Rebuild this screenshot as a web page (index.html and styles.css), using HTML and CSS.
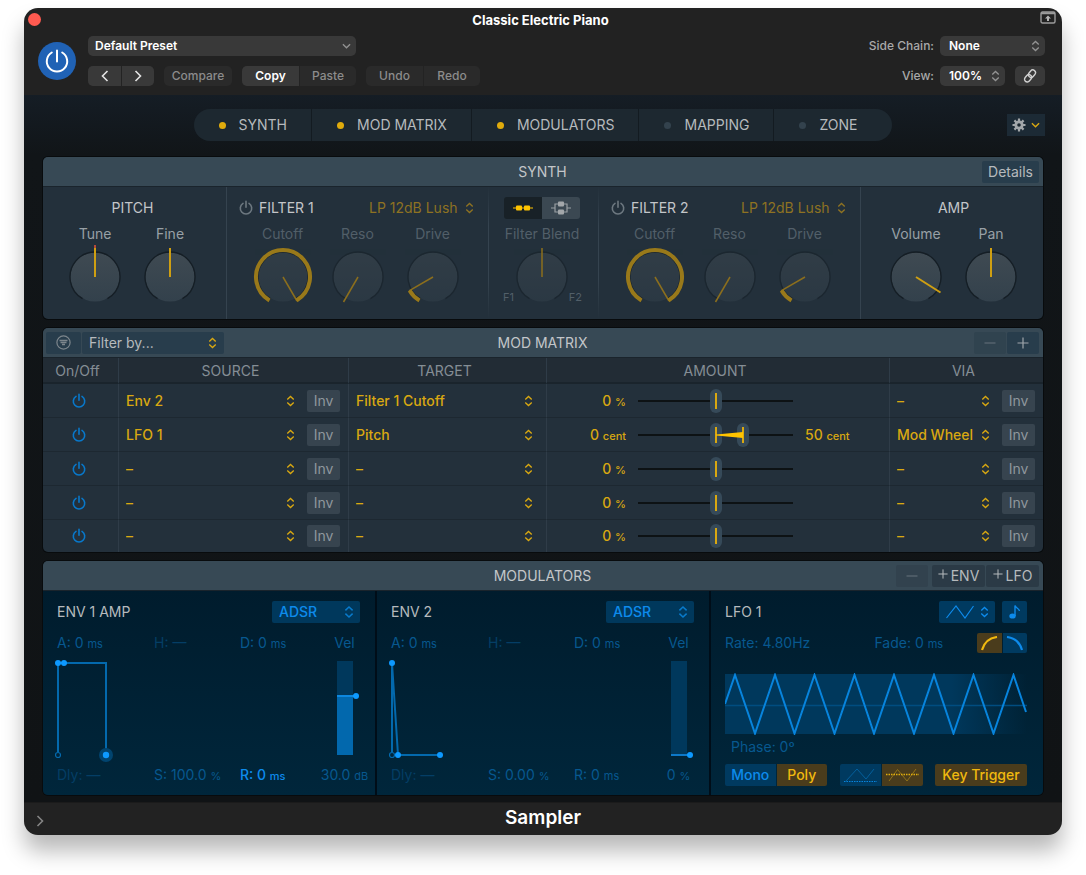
FILE: index.html
```
<!DOCTYPE html>
<html lang="en">
<head>
  <meta charset="UTF-8">
  <meta name="viewport" content="width=device-width, initial-scale=1.0">
  <title>Classic Electric Piano</title>
  <link rel="stylesheet" href="styles.css">
</head>
<body>
  <!-- shared icons -->
  <svg class="icons" aria-hidden="true">
    <symbol id="power" viewBox="0 0 16 16"><path d="M5 3.4a5.7 5.7 0 1 0 6 0M8 1.2v6" fill="none" stroke="currentColor" stroke-width="1.6" stroke-linecap="round"/></symbol>
    <symbol id="updown" viewBox="0 0 10 12"><path d="M1.4 4.4 5 1l3.6 3.4M1.4 7.6 5 11l3.6-3.4" fill="none" stroke="currentColor" stroke-width="1.5"/></symbol>
    <symbol id="down" viewBox="0 0 10 6"><path d="M1 1l4 4 4-4" fill="none" stroke="currentColor" stroke-width="1.5"/></symbol>
    <symbol id="right" viewBox="0 0 8 12"><path d="M1.5 1 6.5 6l-5 5" fill="none" stroke="currentColor" stroke-width="1.6"/></symbol>
    <symbol id="minus" viewBox="0 0 12 12"><path d="M.5 6h11" stroke="currentColor" stroke-width="1.2"/></symbol>
    <symbol id="plus" viewBox="0 0 12 12"><path d="M.5 6h11M6 .5v11" stroke="currentColor" stroke-width="1.2"/></symbol>
    <linearGradient id="dial" x1="0" y1="0" x2="0" y2="1">
      <stop offset="0" stop-color="#3f4a52"/>
      <stop offset="1" stop-color="#33414c"/>
    </linearGradient>
    <linearGradient id="fade" x1="0" y1="0" x2="1" y2="0">
      <stop offset="0.75" stop-color="#00385c"/>
      <stop offset="1" stop-color="#00385c" stop-opacity="0"/>
    </linearGradient>
    <symbol id="knob" viewBox="0 0 64 64">
      <circle cx="32" cy="32" r="24.5" fill="url(#dial)"/>
      <path d="M19.5 53.65a25 25 0 1 1 25 0" fill="none" stroke="#151e25" stroke-width="1.3"/>
    </symbol>
  </svg>

  <main class="window">
    <header class="top">
      <button class="close" aria-label="Close"></button>
      <h1>Classic Electric Piano</h1>
      <button class="detach" aria-label="Detach">
        <svg width="16" height="13" viewBox="0 0 16 13"><rect x="1" y="1" width="14" height="11" rx="1.5" fill="none" stroke="#9b9b9b" stroke-width="1.4"/><path d="M1 2.2h14" stroke="#9b9b9b" stroke-width="2"/><path d="M8 4.5l3 3H9V10H7V7.5H5z" fill="#b5b5b5"/></svg>
      </button>

      <button class="bypass" aria-label="Power" aria-pressed="true">
        <svg width="28" height="28" viewBox="0 0 28 28"><path d="M8.8 5.5a10.2 10.2 0 1 0 10.4 0M14 3.5v11" fill="none" stroke="#fff" stroke-width="2" stroke-linecap="round"/></svg>
      </button>

      <div class="presets">
        <span class="select preset">
          <select aria-label="Preset"><option>Default Preset</option></select>
          <svg width="9" height="6"><use href="#down"/></svg>
        </span>
        <div class="buttons">
          <span class="group">
            <button class="on" aria-label="Previous"><svg class="flip" width="8" height="12"><use href="#right"/></svg></button>
            <button class="on" aria-label="Next"><svg width="8" height="12"><use href="#right"/></svg></button>
          </span>
          <span class="group"><button class="wide">Compare</button></span>
          <span class="group edit"><button class="on">Copy</button><button>Paste</button></span>
          <span class="group edit"><button>Undo</button><button>Redo</button></span>
        </div>
      </div>

      <div class="options">
        <label for="chain">Side Chain:</label>
        <span class="select chain">
          <select id="chain"><option>None</option></select>
          <svg width="9" height="12"><use href="#updown"/></svg>
        </span>
        <label for="view">View:</label>
        <span class="select">
          <select id="view"><option>100%</option></select>
          <svg width="9" height="12"><use href="#updown"/></svg>
        </span>
        <button class="link" aria-label="Link">
          <svg width="16" height="16" viewBox="0 0 16 16"><g transform="rotate(-50 8 8)" fill="none" stroke="#d0d0d0" stroke-width="1.4"><rect x="1" y="5.3" width="8" height="5.4" rx="2.7"/><rect x="7" y="5.3" width="8" height="5.4" rx="2.7"/></g></svg>
        </button>
      </div>
    </header>

    <div class="stage">
      <div class="nav">
        <nav class="tabs">
          <button class="lit">SYNTH</button>
          <button class="lit">MOD MATRIX</button>
          <button class="lit">MODULATORS</button>
          <button>MAPPING</button>
          <button>ZONE</button>
        </nav>
        <button class="gear" aria-label="Settings">
          <svg width="14" height="14" viewBox="0 0 14 14"><g stroke="#a3a7aa" stroke-width="2.2"><path d="M7 .5v13M.5 7h13M2.4 2.4l9.2 9.2M11.6 2.4l-9.2 9.2"/></g><circle cx="7" cy="7" r="4.6" fill="#a3a7aa"/><circle cx="7" cy="7" r="1.8" fill="#1c2831"/></svg>
          <svg class="yellow" width="9" height="6"><use href="#down"/></svg>
        </button>
      </div>

      <section class="panel">
        <div class="bar">
          <span></span>
          <h2>SYNTH</h2>
          <span class="tools"><button>Details</button></span>
        </div>
        <div class="synth">
          <div class="unit pitch">
            <h3>PITCH</h3>
            <div class="knobs">
              <label class="knob">Tune
                <svg width="64" height="64"><use href="#knob"/><path d="M32 32V3"/><path class="red" d="M32 0v3"/></svg>
                <input type="range" value="50">
              </label>
              <label class="knob">Fine
                <svg width="64" height="64"><use href="#knob"/><path d="M32 32V3"/></svg>
                <input type="range" value="50">
              </label>
            </div>
          </div>

          <div class="unit off">
            <div class="filter">
              <button aria-label="Filter 1 on"><svg width="16" height="16"><use href="#power"/></svg></button>
              <h3>FILTER 1</h3>
              <span class="select">
                <select aria-label="Filter 1 type"><option>LP 12dB Lush</option></select>
                <svg width="9" height="12"><use href="#updown"/></svg>
              </span>
            </div>
            <div class="knobs">
              <label class="knob">Cutoff
                <svg width="64" height="64"><use href="#knob"/><path d="M32 32l14 24"/><path class="ring" d="M18.5 55.4a27 27 0 1 1 27 0"/></svg>
                <input type="range" value="100">
              </label>
              <label class="knob">Reso
                <svg width="64" height="64"><use href="#knob"/><path d="M32 32 17.5 57"/></svg>
                <input type="range" value="0">
              </label>
              <label class="knob">Drive
                <svg width="64" height="64"><use href="#knob"/><path d="M32 32 8 45.8"/><path class="ring" d="M18.5 55.4a27 27 0 0 1-9.9-9.9"/></svg>
                <input type="range" value="10">
              </label>
            </div>
          </div>

          <div class="unit off blend">
            <div class="routing">
              <button class="active" aria-label="Serial">
                <svg width="22" height="12" viewBox="0 0 22 12"><path d="M1 6h20" stroke="#ffc400" stroke-width="1.2"/><rect x="4" y="3.5" width="6" height="5" rx="1" fill="#ffc400"/><rect x="12" y="3.5" width="6" height="5" rx="1" fill="#ffc400"/></svg>
              </button>
              <button aria-label="Parallel">
                <svg width="20" height="14" viewBox="0 0 20 14"><path d="M0 7h4M16 7h4M4 3h12v8H4z" fill="none" stroke="#9a9fa3" stroke-width="1.2"/><rect x="7" y="0.5" width="6" height="5" rx="1" fill="#a3a7aa"/><rect x="7" y="8.5" width="6" height="5" rx="1" fill="#a3a7aa"/></svg>
              </button>
            </div>
            <div class="knobs">
              <label class="knob">Filter Blend
                <svg width="64" height="64"><use href="#knob"/><path d="M32 32V3"/></svg>
                <input type="range" value="50">
              </label>
            </div>
            <div class="ends"><span>F1</span><span>F2</span></div>
          </div>

          <div class="unit off">
            <div class="filter">
              <button aria-label="Filter 2 on"><svg width="16" height="16"><use href="#power"/></svg></button>
              <h3>FILTER 2</h3>
              <span class="select">
                <select aria-label="Filter 2 type"><option>LP 12dB Lush</option></select>
                <svg width="9" height="12"><use href="#updown"/></svg>
              </span>
            </div>
            <div class="knobs">
              <label class="knob">Cutoff
                <svg width="64" height="64"><use href="#knob"/><path d="M32 32l14 24"/><path class="ring" d="M18.5 55.4a27 27 0 1 1 27 0"/></svg>
                <input type="range" value="100">
              </label>
              <label class="knob">Reso
                <svg width="64" height="64"><use href="#knob"/><path d="M32 32 17.5 57"/></svg>
                <input type="range" value="0">
              </label>
              <label class="knob">Drive
                <svg width="64" height="64"><use href="#knob"/><path d="M32 32 8 45.8"/><path class="ring" d="M18.5 55.4a27 27 0 0 1-9.9-9.9"/></svg>
                <input type="range" value="10">
              </label>
            </div>
          </div>

          <div class="unit amp">
            <h3>AMP</h3>
            <div class="knobs">
              <label class="knob">Volume
                <svg width="64" height="64"><use href="#knob"/><path d="M32 32l24.5 15.5"/></svg>
                <input type="range" value="90">
              </label>
              <label class="knob">Pan
                <svg width="64" height="64"><use href="#knob"/><path d="M32 32V3"/></svg>
                <input type="range" value="50">
              </label>
            </div>
          </div>
        </div>
      </section>

      <section class="panel">
        <div class="bar">
          <span class="tools">
            <button class="small funnel" aria-label="Filter"><svg width="15" height="15" viewBox="0 0 15 15"><circle cx="7.5" cy="7.5" r="6.6" fill="none" stroke="#7d868c" stroke-width="1.2"/><path d="M3.5 5.5h8M4.5 7.500h6M6 9.500h3" stroke="#7d868c" stroke-width="1.3"/></svg></button>
            <span class="select filterby">
              <select aria-label="Filter by"><option>Filter by...</option></select>
              <svg width="9" height="12"><use href="#updown"/></svg>
            </span>
          </span>
          <h2>MOD MATRIX</h2>
          <span class="tools">
            <button class="small faint" aria-label="Remove"><svg width="12" height="12"><use href="#minus"/></svg></button>
            <button class="small" aria-label="Add"><svg width="12" height="12"><use href="#plus"/></svg></button>
          </span>
        </div>
        <table class="matrix">
          <colgroup><col class="c-on"><col class="c-source"><col class="c-target"><col class="c-amount"><col class="c-via"></colgroup>
          <thead>
            <tr><th>On/Off</th><th>SOURCE</th><th>TARGET</th><th>AMOUNT</th><th>VIA</th></tr>
          </thead>
          <tbody>
            <tr>
              <td><button class="toggle" aria-label="On"><svg width="16" height="16"><use href="#power"/></svg></button></td>
              <td><div class="cell"><span class="select"><select aria-label="Source"><option>Env 2</option></select><svg width="9" height="12"><use href="#updown"/></svg></span><button class="inv">Inv</button></div></td>
              <td><div class="cell target"><span class="select"><select aria-label="Target"><option>Filter 1 Cutoff</option></select><svg width="9" height="12"><use href="#updown"/></svg></span></div></td>
              <td><div class="amount"><span class="value">0 <small>%</small></span><span class="slider"><input type="range" aria-label="Amount" value="50"></span></div></td>
              <td><div class="cell"><span class="select"><select aria-label="Via"><option>–</option></select><svg width="9" height="12"><use href="#updown"/></svg></span><button class="inv">Inv</button></div></td>
            </tr>
            <tr>
              <td><button class="toggle" aria-label="On"><svg width="16" height="16"><use href="#power"/></svg></button></td>
              <td><div class="cell"><span class="select"><select aria-label="Source"><option>LFO 1</option></select><svg width="9" height="12"><use href="#updown"/></svg></span><button class="inv">Inv</button></div></td>
              <td><div class="cell target"><span class="select"><select aria-label="Target"><option>Pitch</option></select><svg width="9" height="12"><use href="#updown"/></svg></span></div></td>
              <td>
                <div class="amount">
                  <span class="value">0 <small>cent</small></span>
                  <span class="slider">
                    <input type="range" aria-label="Amount" value="50">
                    <input class="over" type="range" aria-label="Via amount" value="69">
                    <svg class="wedge" width="27" height="8" viewBox="0 0 27 8"><path d="M0 3.5 27 1v6L0 4.5z" fill="#ffc400"/></svg>
                  </span>
                  <span>50 <small>cent</small></span>
                </div>
              </td>
              <td><div class="cell"><span class="select"><select aria-label="Via"><option>Mod Wheel</option></select><svg width="9" height="12"><use href="#updown"/></svg></span><button class="inv">Inv</button></div></td>
            </tr>
            <tr>
              <td><button class="toggle" aria-label="On"><svg width="16" height="16"><use href="#power"/></svg></button></td>
              <td><div class="cell"><span class="select"><select aria-label="Source"><option>–</option></select><svg width="9" height="12"><use href="#updown"/></svg></span><button class="inv">Inv</button></div></td>
              <td><div class="cell target"><span class="select"><select aria-label="Target"><option>–</option></select><svg width="9" height="12"><use href="#updown"/></svg></span></div></td>
              <td><div class="amount"><span class="value">0 <small>%</small></span><span class="slider"><input type="range" aria-label="Amount" value="50"></span></div></td>
              <td><div class="cell"><span class="select"><select aria-label="Via"><option>–</option></select><svg width="9" height="12"><use href="#updown"/></svg></span><button class="inv">Inv</button></div></td>
            </tr>
            <tr>
              <td><button class="toggle" aria-label="On"><svg width="16" height="16"><use href="#power"/></svg></button></td>
              <td><div class="cell"><span class="select"><select aria-label="Source"><option>–</option></select><svg width="9" height="12"><use href="#updown"/></svg></span><button class="inv">Inv</button></div></td>
              <td><div class="cell target"><span class="select"><select aria-label="Target"><option>–</option></select><svg width="9" height="12"><use href="#updown"/></svg></span></div></td>
              <td><div class="amount"><span class="value">0 <small>%</small></span><span class="slider"><input type="range" aria-label="Amount" value="50"></span></div></td>
              <td><div class="cell"><span class="select"><select aria-label="Via"><option>–</option></select><svg width="9" height="12"><use href="#updown"/></svg></span><button class="inv">Inv</button></div></td>
            </tr>
            <tr>
              <td><button class="toggle" aria-label="On"><svg width="16" height="16"><use href="#power"/></svg></button></td>
              <td><div class="cell"><span class="select"><select aria-label="Source"><option>–</option></select><svg width="9" height="12"><use href="#updown"/></svg></span><button class="inv">Inv</button></div></td>
              <td><div class="cell target"><span class="select"><select aria-label="Target"><option>–</option></select><svg width="9" height="12"><use href="#updown"/></svg></span></div></td>
              <td><div class="amount"><span class="value">0 <small>%</small></span><span class="slider"><input type="range" aria-label="Amount" value="50"></span></div></td>
              <td><div class="cell"><span class="select"><select aria-label="Via"><option>–</option></select><svg width="9" height="12"><use href="#updown"/></svg></span><button class="inv">Inv</button></div></td>
            </tr>
          </tbody>
        </table>
      </section>

      <section class="panel">
        <div class="bar plain">
          <span></span>
          <h2>MODULATORS</h2>
          <span class="tools">
            <button class="small faint" aria-label="Remove"><svg width="12" height="12"><use href="#minus"/></svg></button>
            <button class="add"><svg width="10" height="10"><use href="#plus"/></svg>ENV</button>
            <button class="add"><svg width="10" height="10"><use href="#plus"/></svg>LFO</button>
          </span>
        </div>
        <div class="mods">
          <div class="mod">
            <div class="head">
              <h3>ENV 1 AMP</h3>
              <span class="select adsr"><select aria-label="Envelope 1 type"><option>ADSR</option></select><svg width="10" height="14"><use href="#updown"/></svg></span>
            </div>
            <div class="env">
              <span>A: 0 <small>ms</small></span>
              <span class="dim">H: —</span>
              <span>D: 0 <small>ms</small></span>
              <span class="vel">Vel</span>
              <svg class="graph" width="258" height="104" viewBox="0 0 258 104">
                <path d="M1 95V6h48v92" fill="none" stroke="#0369ad" stroke-width="2"/>
                <circle cx="1" cy="98" r="2.5" fill="none" stroke="#0369ad" stroke-width="1.2"/>
                <circle cx="49" cy="98" r="7" fill="#01446f"/>
                <g fill="#0d99ff"><circle cx="1" cy="6" r="3"/><circle cx="7" cy="6" r="3"/><circle cx="49" cy="98" r="3.2"/></g>
              </svg>
              <svg class="level" width="36" height="104" viewBox="0 0 36 104">
                <rect x="10" y="4" width="16" height="94" fill="#00385c"/>
                <rect x="10" y="39" width="16" height="59" fill="#0268ad"/>
                <path d="M10 39h19" stroke="#0d88e0" stroke-width="2"/>
                <circle cx="29" cy="39" r="3" fill="#0d99ff"/>
              </svg>
              <span class="dim">Dly: —</span>
              <span>S: 100.0 <small>%</small></span>
              <span class="bright">R: 0 <small>ms</small></span>
              <span class="vel">30.0 <small>dB</small></span>
            </div>
          </div>

          <div class="mod">
            <div class="head">
              <h3>ENV 2</h3>
              <span class="select adsr"><select aria-label="Envelope 2 type"><option>ADSR</option></select><svg width="10" height="14"><use href="#updown"/></svg></span>
            </div>
            <div class="env">
              <span>A: 0 <small>ms</small></span>
              <span class="dim">H: —</span>
              <span>D: 0 <small>ms</small></span>
              <span class="vel">Vel</span>
              <svg class="graph" width="258" height="104" viewBox="0 0 258 104">
                <path d="M1 95V6l6 92h42" fill="none" stroke="#0369ad" stroke-width="2"/>
                <circle cx="1" cy="98" r="2.5" fill="none" stroke="#0369ad" stroke-width="1.2"/>
                <g fill="#0d99ff"><circle cx="1" cy="6" r="3"/><circle cx="7" cy="98" r="3"/><circle cx="49" cy="98" r="3"/></g>
              </svg>
              <svg class="level" width="36" height="104" viewBox="0 0 36 104">
                <rect x="10" y="4" width="16" height="94" fill="#00385c"/>
                <path d="M10 98h19" stroke="#0d78c8" stroke-width="2"/>
                <circle cx="29" cy="98" r="3" fill="#0d99ff"/>
              </svg>
              <span class="dim">Dly: —</span>
              <span>S: 0.00 <small>%</small></span>
              <span>R: 0 <small>ms</small></span>
              <span class="vel">0 <small>%</small></span>
            </div>
          </div>

          <div class="mod lfo">
            <div class="head">
              <h3>LFO 1</h3>
              <button class="blue shape" aria-label="Waveform">
                <svg width="28" height="14" viewBox="0 0 28 14"><path d="M.5 13 10 1l9 12L27.5 1" fill="none" stroke="currentColor" stroke-width="1.2"/></svg>
                <svg width="9" height="12"><use href="#updown"/></svg>
              </button>
              <button class="blue note" aria-label="Sync">
                <svg width="12" height="14" viewBox="0 0 12 14"><ellipse cx="3.5" cy="11" rx="3.2" ry="2.6" fill="currentColor"/><path d="M6 11V.5c.5 2.5 4 2.5 4.5 5.5" fill="none" stroke="currentColor" stroke-width="1.4"/></svg>
              </button>
            </div>
            <div class="rate">
              <span>Rate: 4.80Hz</span>
              <span>Fade: 0 <small>ms</small></span>
              <div class="pair curve">
                <button class="gold" aria-label="Fade in"><svg width="17" height="15" viewBox="0 0 17 15"><path d="M1 14C3 7 8 2 16 1" fill="none" stroke="currentColor" stroke-width="2.2"/></svg></button>
                <button class="blue" aria-label="Fade out"><svg width="17" height="15" viewBox="0 0 17 15"><path d="M1 1c8 1 13 6 15 13" fill="none" stroke="currentColor" stroke-width="2.2"/></svg></button>
              </div>
            </div>
            <svg class="wave" viewBox="0 0 302 62" preserveAspectRatio="none">
              <rect y="1" width="302" height="60" fill="url(#fade)"/>
              <path d="M0 32.5h302" stroke="#004d80" stroke-width="1.5"/>
              <path d="M0 31 10 2l20 58.5L50 2l19.5 58.5L89.5 2l20 58.5L129.5 2l19.5 58.5L169 2l20 58.5L209 2l19.5 58.5L248.5 2l20 58.5L288.5 2 301 39" fill="none" stroke="#0784dd" stroke-width="2"/>
            </svg>
            <div class="phase">Phase: 0º</div>
            <div class="modes">
              <div class="pair voice"><button class="blue">Mono</button><button class="gold">Poly</button></div>
              <div class="pair polar">
                <button class="blue" aria-label="Unipolar"><svg width="33" height="16" viewBox="0 0 33 16"><path d="M2 14 13 2l9 10 8-10" fill="none" stroke="#045f9c"/><path d="M0 14.5h33" stroke="#0784dd" stroke-width="1.2" stroke-dasharray="1.5 1"/></svg></button>
                <button class="gold" aria-label="Bipolar"><svg width="33" height="16" viewBox="0 0 33 16"><path d="M3 14 11.5 2.5 21 14 30 2" fill="none" stroke="#907219"/><path d="M0 7.5h33" stroke="#e0ad0c" stroke-width="1.3" stroke-dasharray="1.5 1"/></svg></button>
              </div>
              <button class="gold trigger">Key Trigger</button>
            </div>
          </div>
        </div>
      </section>
    </div>

    <footer class="foot">
      <button aria-label="Expand"><svg width="8" height="12"><use href="#right"/></svg></button>
      <span class="name">Sampler</span>
    </footer>
  </main>
</body>
</html>
```
FILE: styles.css
```
* {
  margin: 0;
  padding: 0;
  box-sizing: border-box;
}

body {
  font-family: "Inter", "Roboto", sans-serif;
  font-size: 14px;
  line-height: 20px;
  background-color: #ffffff;
  color: #b6babd;
}

button, select {
  font: inherit;
  color: inherit;
  border: none;
  background: none;
  appearance: none;
  cursor: pointer;
}

button {
  display: flex;
  align-items: center;
  justify-content: center;
}

svg {
  display: block;
  flex-shrink: 0;
}

h1, h2, h3 {
  font-size: inherit;
  font-weight: 400;
  white-space: nowrap;
}

small {
  font-size: 11px;
  line-height: 1;
}

.icons {
  position: absolute;
  width: 0;
  height: 0;
}

.yellow {
  color: #d9a811;
}

/* drop-downs: the arrow lies over the select */
.select {
  position: relative;
  display: block;
}

.select select {
  display: block;
  width: 100%;
  height: 100%;
  outline: none;
}

.select svg {
  position: absolute;
  top: 50%;
  right: 0;
  transform: translateY(-50%);
  pointer-events: none;
}

.window {
  margin: 8px 24px 40px;
  border-radius: 14px;
  overflow: hidden;
  background-color: #222222;
  box-shadow: 0 16px 22px rgba(0, 0, 0, 0.28);
}

/* title bar and host controls */
.top {
  position: relative;
  display: flex;
  align-items: flex-start;
  height: 87px;
  padding: 28px 17px 0 14px;
  font-size: 12px;
  font-weight: 500;
}

.top h1 {
  position: absolute;
  top: 2px;
  left: 0;
  width: 100%;
  padding-right: 5px;
  text-align: center;
  font-size: 13px;
  font-weight: 700;
  color: #ffffff;
  pointer-events: none;
}

.close {
  position: absolute;
  top: 5px;
  left: 4px;
  width: 13px;
  height: 13px;
  border-radius: 50%;
  background-color: #ff5a50;
}

.detach {
  position: absolute;
  top: 3px;
  right: 6px;
}

.bypass {
  width: 38px;
  height: 38px;
  margin: 6px 12px 0 0;
  border-radius: 50%;
  background-color: #2062b5;
}

.presets {
  width: 392px;
}

.top .select {
  height: 20px;
  border-radius: 5px;
  background-color: #393939;
  color: #ffffff;
  font-weight: 600;
}

.top .select select {
  padding: 0 20px 0 9px;
}

.top .select svg {
  right: 5px;
  color: #929292;
}

.top .preset {
  width: 268px;
}

.top .preset select {
  padding-left: 7px;
}

.buttons {
  display: flex;
  gap: 10px;
  margin-top: 10px;
}

.group {
  display: flex;
  height: 20px;
  border-radius: 5px;
  overflow: hidden;
  background-color: #2a2a2a;
  color: #8c8c8c;
}

.group button {
  width: 33px;
}

.group .wide {
  width: 68px;
}

.group.edit button {
  width: 57px;
}

.group button + button {
  border-left: 1px solid #232323;
}

.group .on {
  background-color: #393939;
  color: #e4e4e4;
}

.group.edit .on {
  font-weight: 600;
  color: #ffffff;
}

.flip {
  transform: scaleX(-1);
}

.options {
  display: grid;
  grid-template-columns: auto 65px 30px;
  gap: 10px;
  margin-left: auto;
  color: #a9a9a9;
}

.options label {
  text-align: right;
  margin-right: -4px;
}

.chain {
  grid-column: span 2;
}

.link {
  height: 20px;
  border-radius: 5px;
  background-color: #393939;
}

/* instrument */
.stage {
  padding: 14px 19px 7px;
  background: linear-gradient(#151d25, #111518 60px, #101315);
}

.nav {
  position: relative;
  display: flex;
  justify-content: center;
  margin-bottom: 16px;
}

.tabs {
  display: flex;
  height: 32px;
  border-radius: 16px;
  overflow: hidden;
  background-color: #1d2830;
}

.tabs button {
  gap: 13px;
  padding: 0 24px 0 25px;
}

.tabs button + button {
  border-left: 1px solid #131b21;
}

.tabs button:last-child {
  padding-right: 35px;
}

.tabs button::before {
  content: "";
  width: 7px;
  height: 7px;
  border-radius: 50%;
  background-color: #33424d;
}

.tabs .lit::before {
  background-color: #e0ab0c;
}

.gear {
  position: absolute;
  top: 5px;
  right: -2px;
  gap: 5px;
  width: 38px;
  height: 22px;
  background-color: #1c2a35;
}

.panel {
  margin-bottom: 9px;
  border-radius: 5px;
  overflow: hidden;
  background-color: #23303b;
  box-shadow: 0 0 0 1px #080b0d;
}

.panel:last-child {
  margin-bottom: 0;
}

.bar {
  display: grid;
  grid-template-columns: 1fr auto 1fr;
  align-items: center;
  height: 30px;
  padding: 0 4px 0 3px;
  background-color: #374955;
  border-bottom: 1px solid #1a242c;
}

.bar h2 {
  color: #c3c6c9;
}

.tools {
  display: flex;
  gap: 1px;
}

.tools:last-child {
  justify-content: flex-end;
}

.tools > * {
  height: 22px;
  border-radius: 2px;
  background-color: #283d4c;
}

.tools button {
  padding: 0 6px;
}

.tools .small {
  width: 32px;
  color: #9fa6ab;
}

.tools .funnel {
  width: 35px;
}

.tools .faint {
  background-color: #30434f;
  color: #66737c;
}

.plain .tools > * {
  background-color: #2b3a46;
}

.plain .tools .faint {
  margin-right: 3px;
  background-color: #32424e;
}

.tools .add {
  align-items: flex-start;
  gap: 3px;
  width: 53px;
  line-height: 22px;
}

.add svg {
  margin-top: 4px;
}

.filterby {
  width: 142px;
}

.filterby select {
  padding: 0 20px 0 7px;
}

.filterby svg {
  right: 7px;
  color: #d9a811;
}

/* synth */
.synth {
  display: grid;
  grid-template-columns: 183fr 262fr 110fr 262fr 183fr;
  height: 132px;
}

.unit {
  position: relative;
  padding-top: 11px;
  color: #98a0a6;
}

.unit h3 {
  text-align: center;
  color: #c3c6c9;
}

.unit + .unit {
  border-left: 1px solid #35434f;
}

.unit.blend, .blend + .unit {
  border-image: linear-gradient(transparent, #35434f 30%, #35434f 70%, transparent) 1;
}

.pitch {
  padding-right: 4px;
}

.amp {
  padding-left: 3px;
}

.knobs {
  display: flex;
  justify-content: center;
  margin-top: 6px;
}

.knob {
  position: relative;
  display: flex;
  flex-direction: column;
  align-items: center;
  gap: 1px;
  width: 75px;
  white-space: nowrap;
}

.knob svg {
  stroke: #cf9f12;
  stroke-width: 2;
  fill: none;
}

.knob use {
  stroke: none;
}

.knob .red {
  stroke: #b5493a;
}

.knob input {
  position: absolute;
  bottom: 8px;
  width: 50px;
  height: 50px;
  opacity: 0;
}

.off .knob {
  color: #525f69;
}

.off .knob svg {
  stroke: #8c6f1d;
  stroke-width: 1.5;
}

.off .knob use {
  opacity: 0.5;
}

.off .knob .ring {
  stroke: #99791a;
  stroke-width: 4;
}

.filter {
  display: flex;
  align-items: center;
  gap: 5px;
  padding: 0 14px 0 11px;
}

.filter button {
  color: #6d7880;
}

.filter .select {
  margin-left: auto;
  color: #8e7222;
}

.filter select {
  padding-right: 16px;
}

.blend {
  padding-right: 3px;
}

.routing {
  display: flex;
  justify-content: center;
  margin-top: -1px;
}

.routing button {
  width: 38px;
  height: 22px;
  margin-bottom: -1px;
  border-radius: 0 3px 3px 0;
  background-color: #3b4852;
}

.routing .active {
  border-radius: 3px 0 0 3px;
  background-color: #182127;
}

.ends {
  position: absolute;
  left: 14px;
  right: 16px;
  bottom: 12px;
  display: flex;
  justify-content: space-between;
  font-size: 11px;
  color: #525f69;
}

/* mod matrix */
.matrix {
  width: 100%;
  table-layout: fixed;
  border-spacing: 0;
  color: #d9a811;
}

.c-on {
  width: 7.5%;
}

.c-source {
  width: 23%;
}

.c-target {
  width: 19.8%;
}

.c-amount {
  width: 34.3%;
}

.c-via {
  width: 15.4%;
}

.matrix th {
  height: 26px;
  padding: 2px 6px 0 0;
  font-weight: 400;
  color: #858e95;
  background-color: #222c35;
  border-bottom: 2px solid #1a242c;
}

.matrix td {
  height: 34px;
  border-bottom: 1px solid #1d2831;
}

.matrix td:first-child {
  padding-right: 4px;
}

.matrix tr:last-child td {
  height: 32px;
  border-bottom: none;
}

.matrix th + th, .matrix td + td {
  border-left: 1px solid #2f3c48;
}

.toggle {
  margin: 0 auto;
  color: #0878cb;
}

.cell {
  display: flex;
  gap: 12px;
  padding: 0 8px 0 7px;
}

.cell .select {
  flex: 1;
  font-weight: 500;
}

.cell.target {
  padding-right: 13px;
}

.inv {
  width: 33px;
  height: 22px;
  border-radius: 2px;
  background-color: #37444f;
  color: #8f979d;
}

.amount {
  display: grid;
  grid-template-columns: 79px 155px 1fr;
  gap: 12px;
  font-weight: 500;
}

.value {
  text-align: right;
}

.slider {
  position: relative;
  height: 20px;
}

.slider input {
  display: block;
  width: 100%;
  height: 20px;
  appearance: none;
  background: linear-gradient(#0d1214, #0d1214) center / 100% 2px no-repeat;
}

.slider .over {
  position: absolute;
  top: 0;
  left: 0;
  background: none;
  pointer-events: none;
}

.slider input::-webkit-slider-thumb {
  appearance: none;
  width: 12px;
  height: 24px;
  border-radius: 6px;
  background: linear-gradient(#d9a811, #d9a811) center / 2px 16px no-repeat, #364a59;
  pointer-events: auto;
}

.wedge {
  position: absolute;
  top: 6px;
  left: 50%;
  pointer-events: none;
}

/* modulators */
.mods {
  display: grid;
  grid-template-columns: repeat(3, 1fr);
  gap: 2px;
  background-color: #000d18;
}

.mod {
  padding: 10px 2px 10px 14px;
  background: linear-gradient(#001c2d, #00263b);
  color: #07588f;
}

.mod h3 {
  color: #b6babd;
}

.head {
  display: flex;
  align-items: center;
  height: 22px;
  margin-bottom: 10px;
}

.adsr {
  width: 88px;
  height: 22px;
  margin: 0 13px 0 auto;
  border-radius: 2px;
  background-color: #00385c;
  color: #0d8bec;
  font-weight: 500;
}

.adsr select {
  padding: 0 20px 0 7px;
}

.adsr svg {
  right: 6px;
  color: #087acb;
}

.env {
  display: grid;
  grid-template-columns: 97fr 86fr 76fr 57fr;
  row-gap: 4px;
  white-space: nowrap;
}

.dim {
  color: #043e65;
}

.bright {
  color: #0d8bec;
  font-weight: 500;
}

.vel {
  justify-self: center;
}

.graph {
  grid-column: span 3;
  overflow: visible;
}

.level {
  justify-self: center;
}

.mod.lfo {
  padding: 10px 16px 9px 14px;
}

.blue {
  background-color: #003a60;
  color: #0d8bec;
}

.gold {
  background-color: #4a3c1c;
  color: #f0b90f;
}

.shape, .note {
  height: 22px;
  border-radius: 2px;
}

.shape {
  gap: 6px;
  width: 56px;
  margin-left: auto;
}

.note {
  width: 25px;
  margin-left: 7px;
}

.rate {
  display: grid;
  grid-template-columns: 150fr 103fr 50px;
}

.pair {
  display: flex;
  gap: 1px;
  border-radius: 2px;
  overflow: hidden;
}

.pair button {
  flex: 1;
}

.wave {
  width: 100%;
  height: 62px;
  margin: 20px 0 2px;
}

.phase {
  padding-left: 6px;
}

.modes {
  display: flex;
  justify-content: space-between;
  height: 22px;
  margin-top: 7px;
  font-weight: 500;
}

.voice {
  width: 102px;
}

.polar {
  width: 83px;
}

.trigger {
  width: 92px;
  border-radius: 2px;
}

/* bottom strip */
.foot {
  position: relative;
  display: flex;
  align-items: center;
  justify-content: center;
  height: 33px;
  padding-bottom: 3px;
  border-top: 1px solid #1b1b1b;
}

.foot button {
  position: absolute;
  bottom: 8px;
  left: 12px;
  color: #858585;
}

.name {
  font-size: 19px;
  font-weight: 600;
  color: #ffffff;
}
```
